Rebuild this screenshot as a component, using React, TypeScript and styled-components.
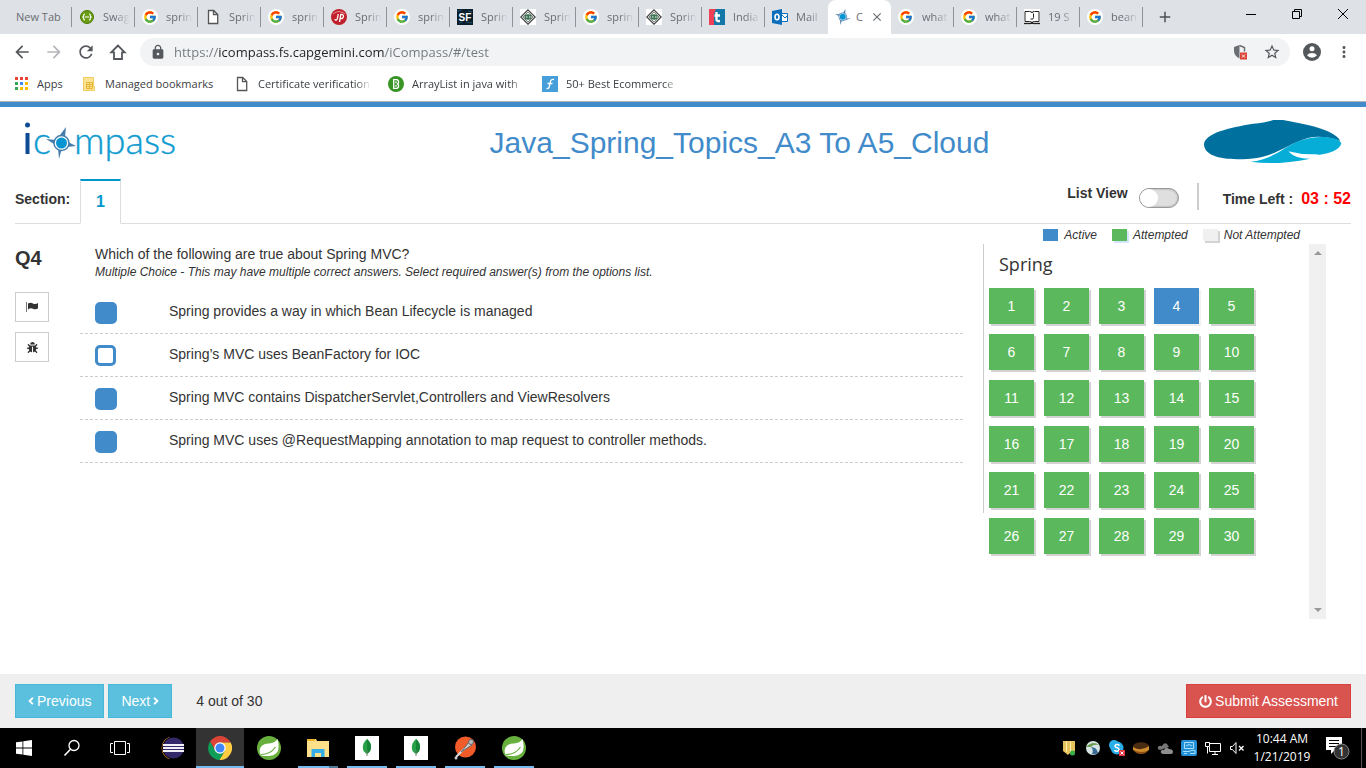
import React, { useState } from "react";
import styled, { createGlobalStyle } from "styled-components";
import { MdArrowBack, MdArrowForward, MdRefresh, MdLock, MdStarBorder, MdMoreVert, MdAdd, MdClose } from "react-icons/md";
import { FaPowerOff, FaBug, FaAngleLeft, FaAngleRight } from "react-icons/fa";
import { FcGoogle } from "react-icons/fc";

const ui = `"Open Sans", "Noto Sans", sans-serif`;
const blue = "#428bca";
const green = "#5cb85c";

const Global = createGlobalStyle`
  *, *::before, *::after { box-sizing: border-box; }
  body { margin: 0; background: #fff; color: #333; font: 14px/20px "Liberation Sans", Arial, sans-serif; }
  button, input { font: inherit; color: inherit; margin: 0; }
  button { border: 0; padding: 0; background: none; cursor: pointer; }
  svg { display: block; flex: none; }
`;

const Screen = styled.div`
  min-height: 100vh;
  display: flex;
  flex-direction: column;
`;

/* ---------- browser chrome ---------- */

const TabStrip = styled.div`
  display: flex;
  height: 34px;
  padding-left: 9px;
  background: #dee1e6;
  font: 11px/16px ${ui};
`;

const TabList = styled.div<{ $count: number }>`
  display: flex;
  flex: 0 1 ${(p) => p.$count * 63}px;
  min-width: 0;
`;

const TabButton = styled.button<{ $active?: boolean; $divider?: boolean }>`
  position: relative;
  display: flex;
  align-items: center;
  gap: ${(p) => (p.$active ? 5 : 8)}px;
  flex: 0 1 63px;
  min-width: 0;
  padding: 0 ${(p) => (p.$active ? 7 : 4)}px 0 7px;
  color: #6a6d72;
  background: ${(p) => (p.$active ? "#fff" : "none")};
  border-radius: 8px 8px 0 0;
  white-space: nowrap;

  &::after {
    content: "";
    position: absolute;
    right: 0;
    top: 7px;
    width: 1px;
    height: 20px;
    background: ${(p) => (p.$divider ? "#8f9296" : "transparent")};
  }
`;

const Fade = styled.span<{ $solid?: boolean }>`
  flex: 1;
  min-width: 0;
  overflow: hidden;
  text-align: left;
  white-space: nowrap;
  mask-image: ${(p) => (p.$solid ? "none" : "linear-gradient(90deg, #000 calc(100% - 16px), transparent calc(100% - 1px))")};
`;

const NewTabButton = styled.button`
  display: grid;
  place-items: center;
  width: 44px;
  color: #4d5156;
`;

const WindowControls = styled.div`
  display: flex;
  margin-left: auto;
`;

const WindowButton = styled.button`
  display: grid;
  place-items: center;
  width: 46px;
  height: 28px;
`;

const Toolbar = styled.div`
  display: flex;
  align-items: center;
  height: 36px;
  padding: 0 6px;
  color: #54575c;
`;

const ToolButton = styled.button<{ $muted?: boolean }>`
  display: grid;
  place-items: center;
  width: 32px;
  height: 28px;
  color: ${(p) => (p.$muted ? "#b4b6b9" : "#54575c")};
`;

const Omnibox = styled.div`
  display: flex;
  align-items: center;
  flex: 1;
  height: 28px;
  margin: 0 6px;
  padding: 0 2px 0 10px;
  border-radius: 14px;
  background: #f1f3f4;
`;

const UrlInput = styled.input`
  flex: 1;
  min-width: 0;
  margin-left: 8px;
  padding: 0;
  border: 0;
  outline: 0;
  font: 13px/20px ${ui};
  color: #202124;
  background: linear-gradient(90deg, #73777c 45px, #202124 45px, #202124 211px, #73777c 211px);
  background-clip: text;
  -webkit-text-fill-color: transparent;
`;

const Bookmarks = styled.nav`
  display: flex;
  align-items: center;
  height: 32px;
  padding: 0 15px 4px;
  font: 11px/16px ${ui};
  border-bottom: 1px solid #b3b3b3;
`;

const Bookmark = styled.a<{ $width: number }>`
  display: flex;
  align-items: center;
  gap: 8px;
  width: ${(p) => p.$width}px;
  padding-right: 16px;
  color: #3c4043;
  text-decoration: none;
`;

/* ---------- assessment page ---------- */

const Page = styled.div`
  display: flex;
  flex-direction: column;
  flex: 1;
  border-top: 5px solid ${blue};
`;

const Header = styled.header`
  display: grid;
  grid-template-columns: 276px 1fr 163px;
  align-items: center;
  height: 72px;
`;

const LogoSlot = styled.div`
  padding-left: 20px;
`;

const Title = styled.h1`
  margin: 0;
  font-size: 30px;
  line-height: 36px;
  font-weight: 400;
  color: ${blue};
  text-align: center;
`;

const SectionBar = styled.div`
  display: flex;
  height: 45px;
  margin: 0 15px;
  border-bottom: 1px solid #ddd;
  font-weight: 700;
`;

const SectionLabel = styled.span`
  width: 65px;
  padding-top: 10px;
`;

const SectionTab = styled.button`
  width: 41px;
  height: 45px;
  border: 1px solid #ddd;
  border-top: 2px solid #0098cc;
  border-bottom-color: #fff;
  background: #fff;
  color: #0098cc;
  font-size: 16px;
  font-weight: 700;
`;

const BarTools = styled.div`
  display: flex;
  align-items: flex-start;
  margin-left: auto;
  padding-top: 4px;
`;

const ViewLabel = styled.label`
  display: flex;
  gap: 11px;
`;

const Switch = styled.input`
  appearance: none;
  display: flex;
  width: 40px;
  height: 20px;
  margin-top: 5px;
  border: 1px solid #999;
  border-radius: 10px;
  background: #dfdfdf;
  box-shadow: inset 0 0 2px #888;

  &::before {
    content: "";
    width: 18px;
    height: 18px;
    border-radius: 9px;
    background: #fff;
  }
  &:checked { justify-content: flex-end; background: ${blue}; }
`;

const Timer = styled.div`
  display: flex;
  gap: 8px;
  margin-left: 18px;
  padding-left: 24px;
  border-left: 2px solid #ccc;
  height: 27px;
  line-height: 32px;
`;

const Remaining = styled.strong`
  color: #f00;
  font-size: 16px;
`;

const Main = styled.main`
  display: grid;
  grid-template-columns: 65px minmax(0, 1fr) 343px;
  flex: 1;
  align-items: start;
  padding: 0 40px 55px 15px;
`;

const Side = styled.aside`
  display: flex;
  flex-direction: column;
  align-items: flex-start;
  gap: 10px;
  padding-top: 24px;
`;

const QuestionNumber = styled.h2`
  margin: 0 0 14px;
  font-size: 20px;
  line-height: 20px;
`;

const SideButton = styled.button`
  display: grid;
  place-items: center;
  width: 34px;
  height: 30px;
  border: 1px solid #ccc;
  background: #fff;
`;

const Question = styled.section`
  margin-right: 20px;
  padding-top: 20px;
`;

const Prompt = styled.div`
  padding: 0 15px 11px;
`;

const PromptText = styled.p`
  margin: 0;
`;

const Hint = styled.p`
  margin: 0;
  font-size: 12px;
  line-height: 16px;
  font-style: italic;
`;

const OptionRow = styled.label`
  display: flex;
  align-items: flex-start;
  height: 43px;
  padding: 10px 15px 0;
  border-bottom: 1px dashed #ccc;
`;

const OptionBox = styled.span`
  width: 74px;
  padding-top: 1px;
`;

const CheckBox = styled.input`
  appearance: none;
  display: block;
  width: 21px;
  height: 21px;
  border: 3px solid ${blue};
  border-radius: 5px;
  background: #fff;

  &:checked { width: 22px; height: 22px; background: ${blue}; }
`;

const Legend = styled.div`
  display: flex;
  justify-content: flex-end;
  gap: 15px;
  height: 20px;
  padding: 2px 26px 0 0;
  font-size: 12px;
  font-style: italic;
`;

const LegendItem = styled.span<{ $color: string; $shadow: string }>`
  display: flex;
  align-items: center;
  gap: 6px;

  &::before {
    content: "";
    width: 15px;
    height: 12px;
    background: ${(p) => p.$color};
    box-shadow: 2px 2px ${(p) => p.$shadow};
  }
`;

const Navigator = styled.div`
  display: flex;
  height: 375px;
`;

const NavDivider = styled.span`
  width: 1px;
  height: 269px;
  background: #ccc;
`;

const NavBody = styled.div`
  flex: 1;
  padding-left: 5px;
`;

const NavTitle = styled.h3`
  margin: 0 0 4px;
  padding-left: 10px;
  font: 400 18px/40px "Open Sans", sans-serif;
`;

const NumberGrid = styled.div`
  display: grid;
  grid-template-columns: repeat(5, 45px);
  gap: 10px;
`;

const NumberButton = styled.button<{ $active: boolean }>`
  height: 36px;
  color: #fff;
  background: ${(p) => (p.$active ? blue : green)};
  box-shadow: 2px 2px ${(p) => (p.$active ? "#f0f0f0" : "#d3d3d3")};
`;

const ScrollTrack = styled.div`
  display: flex;
  flex-direction: column;
  justify-content: space-between;
  align-items: center;
  width: 17px;
  padding: 7px 0;
  background: #f0f0f0;
`;

const Footer = styled.footer`
  display: flex;
  align-items: center;
  gap: 4px;
  height: 54px;
  padding: 0 15px;
  background: #efefef;
`;

const ActionButton = styled.button<{ $danger?: boolean }>`
  display: flex;
  align-items: center;
  gap: 3px;
  height: 34px;
  padding: 0 12px;
  color: #fff;
  background: ${(p) => (p.$danger ? "#d9534f" : "#5bc0de")};
  border: 1px solid ${(p) => (p.$danger ? "#d9403b" : "#46b8da")};
`;

const Progress = styled.span`
  flex: 1;
  margin-left: 20px;
`;

/* ---------- taskbar ---------- */

const Taskbar = styled.div`
  display: flex;
  height: 40px;
  background: #000;
  color: #fff;
  font: 12px/18px ${ui};
`;

const SystemButton = styled.button`
  display: grid;
  place-items: center;
  width: 48px;
`;

const TaskList = styled.div`
  display: flex;
  margin-left: 3px;
`;

const underline = (p: { $open?: boolean; $stacked?: boolean }) => {
  if (!p.$open) return "none";
  return p.$stacked ? "linear-gradient(90deg, #76b9ed 31px, #4c7899 31px)" : "#76b9ed";
};

const TaskButton = styled.button<{ $open?: boolean; $focused?: boolean; $stacked?: boolean }>`
  position: relative;
  display: grid;
  place-items: center;
  width: ${(p) => (p.$focused ? 48 : 49)}px;
  background: ${(p) => (p.$focused ? "#333" : "none")};

  &::after {
    content: "";
    position: absolute;
    bottom: 0;
    left: ${(p) => (p.$focused ? 0 : 5)}px;
    right: ${(p) => (p.$focused ? 0 : 4)}px;
    height: 2px;
    background: ${underline};
  }
`;

const Tray = styled.div`
  display: flex;
  align-items: center;
  margin-left: auto;
`;

const TrayButton = styled.button`
  display: grid;
  place-items: center;
  width: 24px;
  height: 40px;
`;

const Clock = styled.time`
  width: 66px;
  text-align: center;
`;

const Notifications = styled.button`
  display: grid;
  place-items: center;
  width: 47px;
  height: 40px;
  border-right: 1px solid #555;
  margin-right: 4px;
`;

/* ---------- drawings ---------- */

const DocIcon = () => (
  <svg width="16" height="16" viewBox="0 0 16 16" fill="#fff" stroke="#555" strokeWidth="1.3">
    <path d="M3.500 1.500h5.200l4 4v9H3.500zM8.500 1.500V5.700h4.200" />
  </svg>
);

const SwaggerIcon = () => (
  <svg width="16" height="16" viewBox="0 0 16 16">
    <circle cx="8" cy="8" r="6.500" fill="#6a9c12" stroke="#4c7a06" />
    <path d="M6 5q-1.300 0-1.300 1.300v.9l-.9.8.9.8v.9Q4.700 11 6 11M10 5q1.300 0 1.300 1.300v.9l.9.800-.9.8v.9Q11.300 11 10 11M6 8h4" fill="none" stroke="#fff" strokeWidth="1.100" />
  </svg>
);

const GoogleIcon = () => (
  <svg width="16" height="16" viewBox="0 0 16 16">
    <circle cx="8" cy="8" r="8" fill="#fff" />
    <FcGoogle x="1" y="1" size={14} />
  </svg>
);

const JrebelIcon = () => (
  <svg width="16" height="16" viewBox="0 0 16 16">
    <circle cx="8" cy="8" r="8" fill="#c0202a" />
    <path d="M2 5q6-5 12 0" stroke="#e98a8e" fill="none" />
    <path d="M3.500 10.500q2.500 1.500 3-1.500l.7-4M8.500 13l1.300-7.500h1.500q2.500 1.500 0 4H9.500" stroke="#fff" strokeWidth="1.300" fill="none" />
  </svg>
);

const SfIcon = () => (
  <svg width="16" height="16" viewBox="0 0 16 16">
    <path fill="#091d2a" d="M0 0h16v16H0z" />
    <path d="M0 2l5-1M9 13l6 1M2 14l4-1M11 2l4 1" stroke="#205068" />
    <text x="8" y="12" textAnchor="middle" fontSize="10" fontWeight="700" fontFamily="Liberation Sans" fill="#fff">SF</text>
  </svg>
);

const DiamondIcon = () => (
  <svg width="16" height="16" viewBox="0 0 16 16">
    <path fill="#fff" d="M0 0h16v16H0z" />
    <path d="M8 .8 15.200 8 8 15.200.8 8z" fill="#edf2ee" stroke="#444" strokeWidth="1.200" />
    <path d="M8 3l5 5-5 5-5-5z" fill="none" stroke="#888" />
    <path d="M4.500 6.500q3.500-2.500 7 0v3q-3.500 2.500-7 0z" fill="#3c7554" />
    <path d="M6 8h1.500M9 8h1.500" stroke="#fff" />
  </svg>
);

const TrackIcon = () => (
  <svg width="16" height="16" viewBox="0 0 16 16">
    <path fill="#ef4156" d="M0 0h8v16H0z" />
    <path fill="#1378a8" d="M5 0h11v16H5z" />
    <path fill="#ef4156" d="M5 0h2l-2 5z" />
    <path d="M7.500 3v7.500q0 2 3.500 1.500M5.500 6.500H11" stroke="#fff" strokeWidth="2.300" fill="none" />
  </svg>
);

const OutlookIcon = () => (
  <svg width="16" height="16" viewBox="0 0 16 16">
    <path fill="#0a6ebd" d="M0 2l10-2v16L0 14z" />
    <path fill="#fff" stroke="#0a6ebd" d="M9.500 4.500h6v8h-6z" />
    <path d="M10 6l3 3 3-3" stroke="#0a6ebd" fill="none" />
    <ellipse cx="5" cy="8" rx="2" ry="2.700" fill="none" stroke="#fff" strokeWidth="1.600" />
  </svg>
);

const CompassStar = () => (
  <svg width="16" height="16" viewBox="0 0 32 32">
    <path d="M21 0l-1 11 2 8 10 0-11 3-7 0-3 10-1-12-2-6-8-4 11 1 4-1z" fill="#3d73a8" />
    <circle cx="15.500" cy="15.500" r="8" fill="#fff" stroke="#3d73a8" strokeWidth="1.500" />
    <circle cx="15.500" cy="15.500" r="6" fill="#0795d2" />
  </svg>
);

const BookIcon = () => (
  <svg width="16" height="16" viewBox="0 0 16 16">
    <path fill="#fff" d="M0 0h16v16H0z" />
    <path d="M1 2.500h4.500Q8 2.500 8 4q0-1.500 2.500-1.500H15v10h-4.500Q8 12.500 8 14q0-1.500-2.500-1.500H1z" fill="#fff" stroke="#222" />
    <path d="M9.500 4.500v4q0 2.500-3 1.500" fill="none" stroke="#222" />
    <path d="M0 14.500h7l1-1 1 1h7" fill="none" stroke="#222" strokeWidth="1.500" />
  </svg>
);

const HomeIcon = () => (
  <svg width="18" height="18" viewBox="0 0 18 18" fill="none" stroke="currentColor" strokeWidth="1.800">
    <path d="M9 2.500 2.300 9.300H5V16h8V9.300h2.700z" />
  </svg>
);

const ShieldIcon = () => (
  <svg width="16" height="16" viewBox="0 0 16 16">
    <path d="M7.500 1 2 3v4q0 5 5.500 7.500" fill="#6b6f74" />
    <path d="M7.500 1.500 12.500 3.500v4" fill="none" stroke="#6b6f74" strokeWidth="1.500" />
    <path fill="#db4437" d="M8 8.500h7v7H8z" />
    <path d="M10 10.500l3 3M13 10.500l-3 3" stroke="#fff" />
  </svg>
);

const AccountIcon = () => (
  <svg width="18" height="18" viewBox="0 0 18 18">
    <circle cx="9" cy="9" r="9" fill="#54575c" />
    <circle cx="9" cy="5.800" r="2.500" fill="#fff" />
    <path d="M4 12.300q1.500-2.300 5-2.300t5 2.300q-1.800 2.400-5 2.400t-5-2.400z" fill="#fff" />
  </svg>
);

const AppsIcon = () => (
  <svg width="14" height="14" viewBox="0 0 14 14">
    {["#ea4335", "#ea4335", "#ea4335", "#34a853", "#4285f4", "#fbbc05", "#34a853", "#fbbc05", "#fbbc05"].map((c, i) => (
      <rect key={i} x={(i % 3) * 5} y={Math.floor(i / 3) * 5} width="3" height="3" fill={c} />
    ))}
  </svg>
);

const FolderMark = () => (
  <svg width="14" height="16" viewBox="0 0 14 16">
    <path d="M.5 1.500h10v9h1v4H.5z" fill="#fde293" stroke="#f3cc5e" />
    <path d="M3.500 6.500h6v6h-6zM3.500 8.500h6M3.500 10.500h6M6.500 6.500v6" stroke="#e6b83a" fill="none" />
  </svg>
);

const BeginnerIcon = () => (
  <svg width="16" height="16" viewBox="0 0 16 16">
    <circle cx="8" cy="8" r="8" fill="#3a9425" />
    <path d="M5.700 3.700h3.500L10.500 5v2l-1 1 1 1v2l-1.300 1.300H5.700zM8 5.500v1.700M8 9v1.700" fill="none" stroke="#fff" strokeWidth="1.300" />
  </svg>
);

const FIcon = () => (
  <svg width="16" height="16" viewBox="0 0 16 16">
    <path fill="#469fdb" d="M0 0h16v16H0z" />
    <path d="M12 3.500Q9 2.800 8.300 6L7.200 11q-.5 2-2.700 1.500M5.500 7.500h5" fill="none" stroke="#fff" strokeWidth="1.300" />
  </svg>
);

const CompassLogo = () => (
  <svg width="160" height="50" viewBox="0 5 160 50" role="img" aria-label="icompass">
    <circle cx="7.500" cy="12" r="2.500" fill="#0d4b94" />
    <path d="M5.500 20h4v21h-4z" fill="#0d4b94" />
    <g fontFamily="Lato" fontWeight="300" fontSize="38" fill="#109bd1" stroke="#109bd1" strokeWidth="0.400">
      <text x="13" y="41">c</text>
      <text x="54" y="41">mpass</text>
    </g>
    <path d="M46 14l-1 10 3 5 8 4-9 1-5 1-3 11-1-11-4-4-8-5 10 1 4-5z" fill="#477dac" />
    <circle cx="41.500" cy="30" r="7.500" fill="#fff" stroke="#477dac" strokeWidth="1.500" />
    <circle cx="41.500" cy="30" r="5.500" fill="#0795d2" />
  </svg>
);

const BrandLogo = () => (
  <svg width="140" height="46" viewBox="0 12 420 138" role="img" aria-label="Brand">
    <path d="M3 85C5 51 80 35 150 23Q190 19 214 11Q232 7 244 13C330 28 396 45 412 75Q360 57 318 65C256 83 222 115 166 125C80 137 4 127 3 85z" fill="#00709f" />
    <path d="M142 137C208 131 236 97 288 75C340 55 404 61 415 81C410 113 330 129 258 108Q278 129 322 128Q220 149 142 137z" fill="#05add7" />
    <path d="M256 106Q300 118 350 114Q318 124 296 121Q268 118 256 106z" fill="#fff" />
  </svg>
);

const FlagIcon = () => (
  <svg width="12" height="12" viewBox="0 0 12 12">
    <path d="M.5 1v10" stroke="#777" />
    <path d="M2 2.500q2.500-1.300 5 0t5-.5v5.500q-2.500 1.500-5 .3T2 8.500z" fill="#333" />
  </svg>
);

const StartIcon = () => (
  <svg width="16" height="16" viewBox="0 0 16 16" fill="#fff">
    <path d="M0 2.300 6.500 1.400v6.100H0zM7.300 1.300 16 0v7.500H7.300zM0 8.400h6.500v6.200L0 13.700zM7.300 8.400H16V16l-8.700-1.300z" />
  </svg>
);

const SearchIcon = () => (
  <svg width="18" height="18" viewBox="0 0 18 18" fill="none" stroke="#fff" strokeWidth="1.300">
    <circle cx="11" cy="6.500" r="5" />
    <path d="M7.500 10.200 1.500 16.500" strokeWidth="1.600" />
  </svg>
);

const TaskViewIcon = () => (
  <svg width="20" height="14" viewBox="0 0 20 14" fill="none" stroke="#fff">
    <path d="M4.500 .5h11v13h-11zM3 2.500H.5v9H3M17 2.500h2.500v9H17" />
  </svg>
);

const EclipseIcon = () => (
  <svg width="26" height="24" viewBox="0 0 26 24">
    <path d="M11 1.500A11 11 0 0 0 11 22.500Q-2 12 11 1.500z" fill="#f0941e" stroke="#f0941e" strokeWidth="1.500" />
    <circle cx="14.500" cy="12" r="11" fill="#32286a" stroke="#000" />
    <path d="M4 9h21M4 12h21M4 15h21" stroke="#f2f1f8" strokeWidth="1.800" />
  </svg>
);

const ChromeIcon = () => (
  <svg width="24" height="24" viewBox="0 0 48 48">
    <path d="M24 13h21.300A24 24 0 0 0 4 11L14.500 29.500z" fill="#db4437" />
    <path d="M24 13h21.300A24 24 0 0 1 22.500 48L33.500 29.500z" fill="#ffcd40" />
    <path d="M4 11A24 24 0 0 0 22.500 48L33.500 29.500H14.500z" fill="#0f9d58" />
    <circle cx="24" cy="24" r="11.500" fill="#fff" />
    <circle cx="24" cy="24" r="9" fill="#4285f4" />
  </svg>
);

const LeafIcon = () => (
  <svg width="24" height="24" viewBox="0 0 24 24">
    <circle cx="12" cy="12" r="12" fill="#68b03e" />
    <path d="M20.500 3q4.500 16.500-8.500 17-5 .3-8-.5-2.500-4-.5-8Q6 7.500 12 7.500q6-.5 8.500-4.500z" fill="#fff" />
    <path d="M4 18.500q9.500 0 14.500-7.500" fill="none" stroke="#68b03e" strokeWidth="1.200" />
  </svg>
);

const ExplorerIcon = () => (
  <svg width="22" height="20" viewBox="0 0 22 20">
    <path d="M0 1h9l1 2h12v16H0z" fill="#ffe08a" />
    <path d="M0 1h8v2H0z" fill="#efb52a" />
    <path d="M4.500 11h13v8h-3.500v-4H8v4H4.500z" fill="#35aee8" />
  </svg>
);

const MongoIcon = () => (
  <svg width="24" height="24" viewBox="0 0 24 24">
    <path d="M0 0h24v24H0z" fill="#fff" />
    <path d="M12 3q4.500 4 4 8.500T12 18Q8 16 7.800 11.500T12 3z" fill="#26a147" />
    <path d="M12 3q4.500 4 4 8.500T12 18z" fill="#178538" />
    <path d="M12 14v6" stroke="#6a8568" />
  </svg>
);

const PostmanIcon = () => (
  <svg width="24" height="24" viewBox="0 0 24 24">
    <circle cx="12.500" cy="11" r="10.500" fill="#f15a29" />
    <path d="M3 21l9-9" stroke="#ddd" strokeWidth="2" />
    <path d="M8 16l8-10 3 3z" fill="#ccc" stroke="#666" />
    <circle cx="18" cy="6" r="2.500" fill="#bbb" stroke="#666" />
    <circle cx="3" cy="22" r="1.500" fill="#ccc" />
  </svg>
);

const FilesTray = () => (
  <svg width="16" height="16" viewBox="0 0 16 16">
    <path d="M2 1h12v10l-3 3-2-1-2 2-5-4z" fill="#e6c35c" />
    <path d="M5.500 1v11M9.500 1v11" stroke="#fff0ab" />
    <circle cx="11.500" cy="13" r="2.500" fill="#35b34a" />
  </svg>
);
const BirdTray = () => (
  <svg width="16" height="16" viewBox="0 0 16 16">
    <circle cx="8" cy="8" r="7" fill="#d7e5e4" />
    <path d="M1 7Q8 0 14 5q-6-1-8 2z" fill="#6c9c54" />
    <path d="M6 7q6 0 7 6-3 2-6 1 2-4-1-7z" fill="#396d99" />
  </svg>
);
const SkypeTray = () => (
  <svg width="16" height="16" viewBox="0 0 16 16">
    <circle cx="5" cy="5" r="5" fill="#29aee8" />
    <circle cx="8" cy="8" r="6.500" fill="#29aee8" />
    <path d="M10.500 5.500Q9 4 7 4.700q-2 1.300 0 2.700l2 .6q2 1.500 0 3-2 .7-3.700-.8" fill="none" stroke="#fff" strokeWidth="1.500" />
    <path d="M10 10h6v6h-6z" fill="#e03440" />
    <path d="M11.500 11.500l3 3M14.500 11.500l-3 3" stroke="#fff" />
  </svg>
);
const DiscTray = () => (
  <svg width="16" height="12" viewBox="0 0 16 12">
    <path d="M0 4v3q2 5 8 5t8-5V4z" fill="#8f4f14" />
    <ellipse cx="8" cy="4" rx="8" ry="3.700" fill="#4a2c12" />
    <path d="M0 5q8 5 16-1v4Q9 12 0 8z" fill="#cd8b2c" />
  </svg>
);
const CloudTray = () => (
  <svg width="16" height="11" viewBox="0 0 16 11">
    <path d="M3 7Q0 6 1 4t4-1q2-4 5-2l2 3" fill="#777" />
    <path d="M6 11q-3-1-2-3 1-2 3-1 2-4 5-1 4 0 4 3 0 2-2 2z" fill="#8e8e8e" />
  </svg>
);
const ScreenTray = () => (
  <svg width="16" height="16" viewBox="0 0 16 16">
    <rect width="16" height="16" rx="2" fill="#2490d8" />
    <path d="M3.500 2.500h9v6h-9zM5 6q3-3 6 0M2 11.500h6q3-2 6-1v3H9M3 13.500h3" fill="none" stroke="#a9e0ff" />
  </svg>
);
const NetworkTray = () => (
  <svg width="16" height="16" viewBox="0 0 16 16" fill="none" stroke="#fff">
    <path d="M5 3.500h10.500v8H4.500V7M7 14.500h6M10 11.500v3M.5 2.500h4v4h-4zM2.500 6.500v7" />
  </svg>
);
const MuteTray = () => (
  <svg width="16" height="16" viewBox="0 0 16 16" fill="none" stroke="#fff">
    <path d="M1.500 6.500h2l3.500-4v11l-3.500-4h-2z" />
    <path d="M10 6l4.500 4.500M14.500 6 10 10.500" strokeWidth="1.300" />
  </svg>
);
const NotesIcon = () => (
  <svg width="25" height="24" viewBox="0 0 25 24">
    <path d="M0 1h16v13H9l-4 4v-4H0z" fill="#fff" />
    <path d="M3 4.500h10M3 7.500h10M3 10.500h7" stroke="#000" />
    <circle cx="15.500" cy="15.500" r="7.500" fill="#333" stroke="#888" />
    <text x="15.500" y="20" textAnchor="middle" fontSize="12" fontFamily="Open Sans" fill="#fff">1</text>
  </svg>
);

/* ---------- data ---------- */

const tabs: { label: string; icon?: React.ReactNode; active?: boolean }[] = [
  { label: "New Tab" },
  { label: "Swag", icon: <SwaggerIcon /> },
  { label: "sprin", icon: <GoogleIcon /> },
  { label: "Sprin", icon: <DocIcon /> },
  { label: "sprin", icon: <GoogleIcon /> },
  { label: "Sprin", icon: <JrebelIcon /> },
  { label: "sprin", icon: <GoogleIcon /> },
  { label: "Sprin", icon: <SfIcon /> },
  { label: "Sprin", icon: <DiamondIcon /> },
  { label: "sprin", icon: <GoogleIcon /> },
  { label: "Sprin", icon: <DiamondIcon /> },
  { label: "India", icon: <TrackIcon /> },
  { label: "Mail", icon: <OutlookIcon /> },
  { label: "C", icon: <CompassStar />, active: true },
  { label: "what", icon: <GoogleIcon /> },
  { label: "what", icon: <GoogleIcon /> },
  { label: "19 S", icon: <BookIcon /> },
  { label: "bean", icon: <GoogleIcon /> },
];

const bookmarks = [
  { label: "Apps", icon: <AppsIcon />, width: 68, solid: true },
  { label: "Managed bookmarks", icon: <FolderMark />, width: 151, solid: true },
  { label: "Certificate verification", icon: <DocIcon />, width: 154 },
  { label: "ArrayList in java with", icon: <BeginnerIcon />, width: 154 },
  { label: "50+ Best Ecommerce", icon: <FIcon />, width: 154 },
];

const initialOptions = [
  { text: "Spring provides a way in which Bean Lifecycle is managed", on: true },
  { text: "Spring’s MVC uses BeanFactory for IOC", on: false },
  { text: "Spring MVC contains DispatcherServlet,Controllers and ViewResolvers", on: true },
  { text: "Spring MVC uses @RequestMapping annotation to map request to controller methods.", on: true },
];

const tasks = [
  { name: "Eclipse", icon: <EclipseIcon /> },
  { name: "Chrome", icon: <ChromeIcon />, open: true, focused: true },
  { name: "Spring Tool Suite", icon: <LeafIcon /> },
  { name: "File Explorer", icon: <ExplorerIcon />, open: true, stacked: true },
  { name: "MongoDB", icon: <MongoIcon />, open: true },
  { name: "MongoDB Shell", icon: <MongoIcon />, open: true },
  { name: "Postman", icon: <PostmanIcon />, open: true },
  { name: "Spring Tool Suite 4", icon: <LeafIcon />, open: true },
];

const tray = [
  { name: "Files", icon: <FilesTray /> },
  { name: "Network client", icon: <BirdTray /> },
  { name: "Skype", icon: <SkypeTray /> },
  { name: "Disc", icon: <DiscTray /> },
  { name: "OneDrive", icon: <CloudTray /> },
  { name: "Display", icon: <ScreenTray /> },
  { name: "Network", icon: <NetworkTray /> },
  { name: "Volume", icon: <MuteTray /> },
];

export default function App() {
  const [options, setOptions] = useState(initialOptions);
  const [current, setCurrent] = useState(4);
  const toggle = (index: number) =>
    setOptions(options.map((o, i) => (i === index ? { ...o, on: !o.on } : o)));

  return (
    <Screen>
      <Global />
      <TabStrip>
        <TabList $count={tabs.length}>
          {tabs.map((tab, i) => (
            <TabButton key={i} $active={tab.active} $divider={!tab.active && !tabs[i + 1]?.active}>
              {tab.icon}
              <Fade $solid={!tab.icon || tab.active}>{tab.label}</Fade>
              {tab.active && <MdClose size={14} />}
            </TabButton>
          ))}
        </TabList>
        <NewTabButton aria-label="New tab"><MdAdd size={18} /></NewTabButton>
        <WindowControls>
          <WindowButton aria-label="Minimize">
            <svg width="10" height="10" stroke="#000"><path d="M0 5.500h10" /></svg>
          </WindowButton>
          <WindowButton aria-label="Restore">
            <svg width="10" height="10" fill="none" stroke="#000"><path d="M.5 2.500h7v7h-7zM2.500 2.500v-2h7v7h-2" /></svg>
          </WindowButton>
          <WindowButton aria-label="Close">
            <svg width="10" height="10" stroke="#000"><path d="M0 0l10 10M10 0 0 10" /></svg>
          </WindowButton>
        </WindowControls>
      </TabStrip>

      <Toolbar>
        <ToolButton aria-label="Back"><MdArrowBack size={20} /></ToolButton>
        <ToolButton aria-label="Forward" $muted><MdArrowForward size={20} /></ToolButton>
        <ToolButton aria-label="Reload"><MdRefresh size={20} /></ToolButton>
        <ToolButton aria-label="Home"><HomeIcon /></ToolButton>
        <Omnibox>
          <MdLock size={16} />
          <UrlInput aria-label="Address" defaultValue="https://icompass.fs.capgemini.com/iCompass/#/test" />
          <ToolButton aria-label="Blocked content"><ShieldIcon /></ToolButton>
          <ToolButton aria-label="Bookmark this page"><MdStarBorder size={18} /></ToolButton>
        </Omnibox>
        <ToolButton aria-label="Profile"><AccountIcon /></ToolButton>
        <ToolButton aria-label="Menu"><MdMoreVert size={18} /></ToolButton>
      </Toolbar>

      <Bookmarks>
        {bookmarks.map((b) => (
          <Bookmark key={b.label} href="#" $width={b.width}>
            {b.icon}
            <Fade $solid={b.solid}>{b.label}</Fade>
          </Bookmark>
        ))}
      </Bookmarks>

      <Page>
        <Header>
          <LogoSlot><CompassLogo /></LogoSlot>
          <Title>Java_Spring_Topics_A3 To A5_Cloud</Title>
          <BrandLogo />
        </Header>

        <SectionBar>
          <SectionLabel>Section:</SectionLabel>
          <SectionTab>1</SectionTab>
          <BarTools>
            <ViewLabel>
              List View
              <Switch type="checkbox" role="switch" />
            </ViewLabel>
            <Timer>
              <span>Time Left :</span>
              <Remaining>03 : 52</Remaining>
            </Timer>
          </BarTools>
        </SectionBar>

        <Main>
          <Side>
            <QuestionNumber>Q{current}</QuestionNumber>
            <SideButton aria-label="Flag question"><FlagIcon /></SideButton>
            <SideButton aria-label="Report a problem"><FaBug size={11} /></SideButton>
          </Side>

          <Question>
            <Prompt>
              <PromptText>Which of the following are true about Spring MVC?</PromptText>
              <Hint>Multiple Choice - This may have multiple correct answers. Select required answer(s) from the options list.</Hint>
            </Prompt>
            {options.map((option, i) => (
              <OptionRow key={option.text}>
                <OptionBox>
                  <CheckBox type="checkbox" checked={option.on} onChange={() => toggle(i)} />
                </OptionBox>
                {option.text}
              </OptionRow>
            ))}
          </Question>

          <div>
            <Legend>
              <LegendItem $color={blue} $shadow="transparent">Active</LegendItem>
              <LegendItem $color={green} $shadow="#d3e5fa">Attempted</LegendItem>
              <LegendItem $color="#f0f0f0" $shadow="#d3d3d3">Not Attempted</LegendItem>
            </Legend>
            <Navigator>
              <NavDivider />
              <NavBody>
                <NavTitle>Spring</NavTitle>
                <NumberGrid>
                  {Array.from({ length: 30 }, (_, i) => i + 1).map((n) => (
                    <NumberButton key={n} $active={n === current} onClick={() => setCurrent(n)}>{n}</NumberButton>
                  ))}
                </NumberGrid>
              </NavBody>
              <ScrollTrack>
                <svg width="8" height="4" fill="#999"><path d="M0 4l4-4 4 4z" /></svg>
                <svg width="8" height="4" fill="#999"><path d="M0 0l4 4 4-4z" /></svg>
              </ScrollTrack>
            </Navigator>
          </div>
        </Main>

        <Footer>
          <ActionButton onClick={() => setCurrent(Math.max(1, current - 1))}>
            <svg width="6" height="10"><FaAngleLeft x="-3" y="-1" size={12} /></svg>Previous
          </ActionButton>
          <ActionButton onClick={() => setCurrent(Math.min(30, current + 1))}>
            Next<svg width="6" height="10"><FaAngleRight x="-3" y="-1" size={12} /></svg>
          </ActionButton>
          <Progress>{current} out of 30</Progress>
          <ActionButton $danger><FaPowerOff size={13} />Submit Assessment</ActionButton>
        </Footer>
      </Page>

      <Taskbar>
        <SystemButton aria-label="Start"><StartIcon /></SystemButton>
        <SystemButton aria-label="Search"><SearchIcon /></SystemButton>
        <SystemButton aria-label="Task view"><TaskViewIcon /></SystemButton>
        <TaskList>
          {tasks.map((t) => (
            <TaskButton key={t.name} aria-label={t.name} $open={t.open} $focused={t.focused} $stacked={t.stacked}>{t.icon}</TaskButton>
          ))}
        </TaskList>
        <Tray>
          {tray.map((t) => (
            <TrayButton key={t.name} aria-label={t.name}>{t.icon}</TrayButton>
          ))}
          <Clock>10:44 AM<br />1/21/2019</Clock>
          <Notifications aria-label="Notifications"><NotesIcon /></Notifications>
        </Tray>
      </Taskbar>
    </Screen>
  );
}
